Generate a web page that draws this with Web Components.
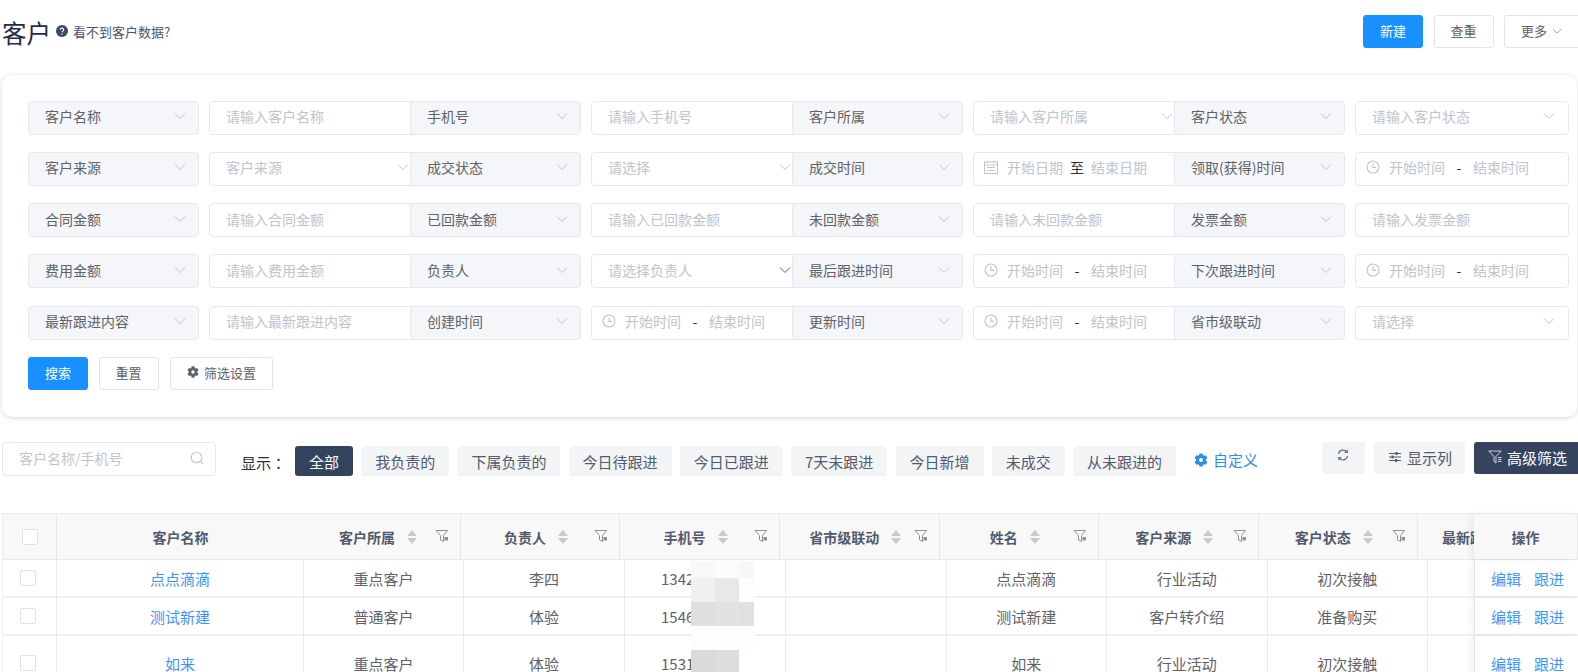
<!DOCTYPE html>
<html lang="zh">
<head>
<meta charset="utf-8">
<title>客户</title>
<style>
  html, body { margin: 0; padding: 0; background: #fff; overflow: hidden; height: 100%; }
  body { font-family: "Noto Sans CJK SC", "Noto Sans", sans-serif; color: #606266; }
</style>
</head>
<body>
<crm-page></crm-page>
<script>
/* ICONS */
const ICONS = {
  chevron: '<svg viewBox="0 0 12 12" width="12" height="12" fill="none" stroke="currentColor" stroke-width="1"><path d="M1 3.5l5 5 5-5"/></svg>',
  clock: '<svg viewBox="0 0 14 14" width="14" height="14" fill="none" stroke="currentColor" stroke-width="1.1"><circle cx="7" cy="7" r="6"/><path d="M7 3.2V7.4h3"/></svg>',
  date: '<svg viewBox="0 0 14 14" width="14" height="14" fill="none" stroke="currentColor" stroke-width="1"><rect x=".5" y="2" width="13" height="11.500"/><path d="M.5 5h13M4 .5V3M10 .5V3M3 7.500h8M3 10.500h8"/></svg>',
  gear: '<svg viewBox="0 0 14 14" width="100%" height="100%"><path fill="currentColor" fill-rule="evenodd" d="M5.400.4h3.200l.4 1.800 1 .6 1.800-.6 1.600 2.800-1.400 1.300v1.400l1.400 1.300-1.600 2.800-1.800-.6-1 .6-.4 1.800H5.400L5 11.800l-1-.6-1.800.6L.6 9l1.400-1.300V6.300L.6 5l1.600-2.800 1.800.6 1-.6zM7 5a2 2 0 1 0 0 4 2 2 0 0 0 0-4z"/></svg>',
  search: '<svg viewBox="0 0 14 14" width="14" height="14" fill="none" stroke="currentColor" stroke-width="1.1"><circle cx="6.500" cy="6.500" r="5.300"/><path d="M10.400 10.400l2.800 2.800"/></svg>',
  refresh: '<svg viewBox="0 0 12 12" width="12" height="12" fill="none" stroke="currentColor" stroke-width="1.200"><path d="M1.500 5A4.600 4.600 0 0 1 9.800 3"/><path d="M10.500 7A4.600 4.600 0 0 1 2.200 9"/><path d="M10.200 .8V3.400H7.700M1.800 11.200V8.600h2.500"/></svg>',
  sliders: '<svg viewBox="0 0 12 12" width="12" height="12" fill="none" stroke="currentColor" stroke-width="1.100"><path d="M0 2.500h12M0 6h12M0 9.500h12"/><path stroke-width="2" d="M7.500 1v3M3.500 4.500v3M7 8v3"/></svg>',
  funnel: '<svg viewBox="0 0 14 14" width="14" height="14" fill="none" stroke="currentColor" stroke-width="1"><path d="M.8 1h12.400L8 6.500V13L6 11.500V6.500z"/><path d="M10 7.500h3.500M10 9.500h3.500M10 11.500h3.500"/></svg>',
  help: '<svg viewBox="0 0 12 12" width="12" height="12"><circle cx="6" cy="6" r="6" fill="#3a4a63"/><path d="M4.300 4.700a1.700 1.700 0 1 1 2.600 1.400c-.6.400-.9.600-.9 1.200" fill="none" stroke="#fff" stroke-width="1.100"/><circle cx="6" cy="9" r=".7" fill="#fff"/></svg>'
};

/* BUTTON */
class UiButton extends HTMLElement {
  constructor() {
    super();
    this.attachShadow({ mode: 'open' });
    this.shadowRoot.innerHTML = `<style>
      :host { display: inline-flex; align-items: center; justify-content: center; box-sizing: border-box;
        height: 33px; width: 60px; padding-bottom: 2px; border: 1px solid #e1e4ec; border-radius: 3px; background: #fff;
        color: #606266; font-size: 13px; gap: 5px; white-space: nowrap; }
      :host([primary]) { background: #1890ff; border-color: #1890ff; color: #fff; }
    </style><slot></slot>`;
  }
}
customElements.define('ui-button', UiButton);

/* FILTER FIELDS */
class FieldLabel extends HTMLElement {
  constructor() {
    super();
    this.attachShadow({ mode: 'open' });
    this.shadowRoot.innerHTML = `<style>
      :host { display: flex; align-items: center; justify-content: space-between; box-sizing: border-box;
        position: relative; z-index: 1; flex: none; width: 171px; height: 34px; padding: 0 12px 3px 16px;
        background: #f4f6fa; border: 1px solid #e6e8f0; border-radius: 4px; color: #606266; font-size: 14px; white-space: nowrap; }
      i { display: flex; color: #c0c4cc; }
    </style><slot></slot><i>${ICONS.chevron}</i>`;
  }
}
customElements.define('field-label', FieldLabel);

class FieldInput extends HTMLElement {
  constructor() {
    super();
    this.attachShadow({ mode: 'open' });
    this.shadowRoot.innerHTML = `<style>
      :host { display: flex; align-items: center; justify-content: space-between; box-sizing: border-box;
        flex: none; width: 214px; height: 34px; padding: 0 13px 3px 16px; margin: 0 -14px 0 10px;
        background: #fff; border: 1px solid #e6e8f0; border-radius: 4px; color: #c0c4cc; font-size: 14px; white-space: nowrap; }
      i { display: flex; color: #c0c4cc; }
      :host([dark]) i { color: #606266; }
    </style><slot></slot>`;
    if (this.hasAttribute('arrow')) {
      this.shadowRoot.innerHTML += `<i>${ICONS.chevron}</i>`;
    }
  }
}
customElements.define('field-input', FieldInput);

class FieldRange extends HTMLElement {
  constructor() {
    super();
    this.attachShadow({ mode: 'open' });
    const isDate = this.getAttribute('kind') === 'date';
    const start = isDate ? '开始日期' : '开始时间';
    const end = isDate ? '结束日期' : '结束时间';
    const sep = isDate ? '至' : '-';
    this.shadowRoot.innerHTML = `<style>
      :host { display: flex; align-items: center; box-sizing: border-box; flex: none; width: 214px; height: 34px;
        padding: 0 0 3px 10px; margin: 0 -14px 0 10px; background: #fff; border: 1px solid #e6e8f0; border-radius: 4px;
        color: #c0c4cc; font-size: 14px; white-space: nowrap; }
      i { display: flex; margin-right: 9px; }
      b { font-weight: 400; width: 28px; text-align: center; color: #303133; }
    </style><i>${isDate ? ICONS.date : ICONS.clock}</i><span>${start}</span><b>${sep}</b><span>${end}</span>`;
  }
}
customElements.define('field-range', FieldRange);

/* PAGE HEADER */
class CrmHeader extends HTMLElement {
  constructor() {
    super();
    this.attachShadow({ mode: 'open' });
    this.shadowRoot.innerHTML = `<style>
      :host { display: flex; justify-content: space-between; box-sizing: border-box; height: 48px; padding: 15px 0 0; }
      .title { display: flex; align-items: center; height: 36px; }
      h1 { margin: 0 5px 0 0; font-size: 24.500px; font-weight: 400; color: #1f2d45; line-height: 36px; }
      .tip { display: flex; align-items: center; gap: 5px; font-size: 13px; color: #4a5468; margin-top: -4px; }
      .btns { display: flex; gap: 10.500px; margin-right: -8px; }
      .more { width: 82px; justify-content: flex-start; padding-left: 16px; }
      .more i { display: flex; color: #909399; }
    </style>
    <div class="title"><h1>客户</h1><div class="tip">${ICONS.help}<span>看不到客户数据?</span></div></div>
    <div class="btns">
      <ui-button primary>新建</ui-button>
      <ui-button>查重</ui-button>
      <ui-button class="more">更多<i>${ICONS.chevron.replace(/"12"/g, '"10"')}</i></ui-button>
    </div>`;
  }
}
customElements.define('crm-header', CrmHeader);

/* FILTER PANEL */
const FILTERS = [
  ['客户名称', 'i:请输入客户名称'], ['手机号', 'i:请输入手机号'], ['客户所属', 'a:请输入客户所属'], ['客户状态', 'a:请输入客户状态'],
  ['客户来源', 'a:客户来源'], ['成交状态', 'a:请选择'], ['成交时间', 'd'], ['领取(获得)时间', 't'],
  ['合同金额', 'i:请输入合同金额'], ['已回款金额', 'i:请输入已回款金额'], ['未回款金额', 'i:请输入未回款金额'], ['发票金额', 'i:请输入发票金额'],
  ['费用金额', 'i:请输入费用金额'], ['负责人', 'k:请选择负责人'], ['最后跟进时间', 't'], ['下次跟进时间', 't'],
  ['最新跟进内容', 'i:请输入最新跟进内容'], ['创建时间', 't'], ['更新时间', 't'], ['省市级联动', 'a:请选择']
];

class CrmFilter extends HTMLElement {
  constructor() {
    super();
    this.attachShadow({ mode: 'open' });
    const items = FILTERS.map(([label, field]) => {
      let right = '';
      if (field === 't') right = '<field-range></field-range>';
      else if (field === 'd') right = '<field-range kind="date"></field-range>';
      else if (field[0] === 'a') right = `<field-input arrow>${field.slice(2)}</field-input>`;
      else if (field[0] === 'k') right = `<field-input arrow dark>${field.slice(2)}</field-input>`;
      else right = `<field-input>${field.slice(2)}</field-input>`;
      return `<div class="item"><field-label>${label}</field-label>${right}</div>`;
    }).join('');
    this.shadowRoot.innerHTML = `<style>
      :host { display: block; box-sizing: border-box; width: 1575px; height: 342px; margin-top: 26.500px;
        padding: 26px 0 0 26px; background: #fff; border-radius: 10px;
        box-shadow: 0 1px 5px rgba(0, 0, 0, .16); }
      .grid { display: grid; grid-template-columns: repeat(4, 382px); row-gap: 17.250px; }
      .item { display: flex; }
      .btns { display: flex; gap: 10.500px; margin-top: 17px; }
      .set { width: 103px; margin-left: 1px; }
      .set i { display: flex; width: 12px; height: 12px; color: #5a6270; }
    </style>
    <div class="grid">${items}</div>
    <div class="btns">
      <ui-button primary>搜索</ui-button>
      <ui-button>重置</ui-button>
      <ui-button class="set"><i>${ICONS.gear}</i>筛选设置</ui-button>
    </div>`;
  }
}
customElements.define('crm-filter', CrmFilter);

/* TOOLBAR */
class ScopeTab extends HTMLElement {
  constructor() {
    super();
    this.attachShadow({ mode: 'open' });
    this.shadowRoot.innerHTML = `<style>
      :host { display: flex; align-items: center; box-sizing: border-box; height: 30px; padding: 0 14px;
        background: #f3f4f6; border-radius: 3px; color: #515a6e; font-size: 15px; white-space: nowrap; }
      :host([active]) { background: #34435e; color: #fff; }
    </style><slot></slot>`;
  }
}
customElements.define('scope-tab', ScopeTab);

class CrmToolbar extends HTMLElement {
  constructor() {
    super();
    this.attachShadow({ mode: 'open' });
    const tabs = ['我负责的', '下属负责的', '今日待跟进', '今日已跟进', '7天未跟进', '今日新增', '未成交', '从未跟进的']
      .map(t => `<scope-tab>${t}</scope-tab>`).join('');
    this.shadowRoot.innerHTML = `<style>
      :host { display: flex; align-items: flex-start; height: 34px; margin-top: 25.500px; }
      .search { display: flex; align-items: center; justify-content: space-between; box-sizing: border-box;
        width: 214px; height: 34px; padding: 0 11px 3px 16px; border: 1px solid #e6e8f0; border-radius: 4px;
        color: #c0c4cc; font-size: 14px; }
      .search i { display: flex; }
      .show { margin: 10px 0 0 25px; width: 54px; font-size: 15px; line-height: 22px; color: #303133; white-space: nowrap; font-family: "Noto Sans CJK TC", sans-serif; }
      .tabs { display: flex; gap: 8.200px; margin-top: 4px; }
      .custom { display: flex; align-items: center; gap: 5px; height: 30px; padding-bottom: 3px; box-sizing: border-box; margin: 4px 0 0 18px; color: #2d8cf0; font-size: 15px; white-space: nowrap; }
      .custom i { display: flex; width: 14px; height: 14px; }
      .right { display: flex; gap: 9px; margin-left: auto; margin-right: -8px; }
      .tool { display: flex; align-items: center; box-sizing: border-box; height: 32px; padding-bottom: 2px; border-radius: 3px;
        background: #f3f4f6; color: #515a6e; font-size: 15px; white-space: nowrap; }
      .tool i { display: flex; }
      .tool.re { width: 43px; padding: 0 0 6px 15px; color: #666e7c; }
      .tool.col { width: 91px; padding-left: 15px; gap: 6px; }
      .tool.adv { width: 112px; padding-left: 14px; gap: 5px; background: #34435e; color: #fff; }
      .tool.adv i { color: #cfd4dd; }
    </style>
    <div class="search"><span>客户名称/手机号</span><i>${ICONS.search}</i></div>
    <div class="show" lang="zh-TW">显示：</div>
    <div class="tabs"><scope-tab active>全部</scope-tab>${tabs}</div>
    <div class="custom"><i>${ICONS.gear}</i>自定义</div>
    <div class="right">
      <div class="tool re"><i>${ICONS.refresh}</i></div>
      <div class="tool col"><i>${ICONS.sliders}</i>显示列</div>
      <div class="tool adv"><i>${ICONS.funnel}</i>高级筛选</div>
    </div>`;
  }
}
customElements.define('crm-toolbar', CrmToolbar);

/* TABLE */
const HEAD_COLS = '54px 247px 157px 159px 160px 159.500px 159.500px 159.500px 159.500px 56px 104px';
const BODY_COLS = '54px 247px 160px 161px 161px 160.500px 160.500px 160.500px 160.500px 47px 104px';

const ROWS = [
  { h: 38, name: '点点滴滴', owner: '重点客户', lead: '李四', phone: '1342', who: '点点滴滴', src: '行业活动', state: '初次接触' },
  { h: 38, name: '测试新建', owner: '普通客户', lead: '体验', phone: '1546', who: '测试新建', src: '客户转介绍', state: '准备购买' },
  { h: 56, name: '如来', owner: '重点客户', lead: '体验', phone: '1531', who: '如来', src: '行业活动', state: '初次接触' }
];

// 手机号 columns are pixelated in the source, colours read off the reference
const MOSAIC = [
  '#f8f8f8', '#fbfbfb', '#f6f7f9',
  '#f0f0f0', '#e8e8e8', '#fdfdfd',
  '#dfdfdf', '#e2e2e2', '#e0e0e2',
  '#fdfdfd', '#fefefe', '#fefefe',
  '#dadada', '#dddddd', '#ffffff'
];

class CrmTable extends HTMLElement {
  constructor() {
    super();
    this.attachShadow({ mode: 'open' });
    const funnel = '<svg class="fl" viewBox="0 0 14 14" width="14" height="14" fill="none" stroke="#8c929c" stroke-width="1"><path d="M1 1.500h11.500L8.500 6.500v6l-3-1.500V6.500z"/><rect x="9.500" y="8" width="3.500" height="3.500" fill="#8c929c" stroke="none"/></svg>';
    const caret = '<svg class="cr" viewBox="0 0 10 16" width="10" height="16" fill="#c6cad2"><path d="M5 1l5 6H0zM5 15L0 9h10z"/></svg>';
    const th = t => `<div class="th"><span>${t}</span>${caret}${funnel}</div>`;
    const heads = ['客户所属', '负责人', '手机号', '省市级联动', '姓名', '客户来源', '客户状态'].map(th).join('');
    const rows = ROWS.map(r => `<div class="row" style="height:${r.h}px">
      <div class="td chk"><span class="box"></span></div>
      <div class="td link">${r.name}</div>
      <div class="td">${r.owner}</div>
      <div class="td">${r.lead}</div>
      <div class="td phone">${r.phone}</div>
      <div class="td"></div>
      <div class="td">${r.who}</div>
      <div class="td">${r.src}</div>
      <div class="td">${r.state}</div>
      <div class="td"></div>
      <div class="td ops"><span>编辑</span><span>跟进</span></div>
    </div>`).join('');
    const mosaic = MOSAIC.map(c => `<b style="background:${c}"></b>`).join('');
    this.shadowRoot.innerHTML = `<style>
      :host { display: block; position: relative; margin: 37px 0 0 0; width: 1576px; font-size: 15px; color: #606266; }
      .head { display: grid; grid-template-columns: ${HEAD_COLS}; height: 47px; box-sizing: border-box;
        background: #f8f8f9; border-top: 1px solid #e8eaf0; border-bottom: 1px solid #e8eaf0; border-left: 1px solid #e8eaf0; }
      .th { position: relative; display: flex; align-items: center; justify-content: center; box-sizing: border-box;
        padding-right: 8px; gap: 12px; border-right: 1px solid #e4e7ed; font-size: 14px; font-weight: 700; color: #515a6e; white-space: nowrap; overflow: hidden; }
      .th.plain { padding-right: 0; }
      .th.open { border-right: 0; }
      .th.clip { justify-content: flex-start; padding-left: 24px; border-right: 0; }
      .fl { position: absolute; right: 11px; top: 15px; }
      .row { display: grid; grid-template-columns: ${BODY_COLS}; box-sizing: border-box; border-bottom: 2px solid #eef0f5; border-left: 1px solid #eef0f5; }
      .td { display: flex; align-items: center; justify-content: center; border-right: 1px solid #e8eaf0; white-space: nowrap; }
      .td.chk { padding-right: 4px; }
      .td.link { color: #3d95fb; }
      .td.phone { justify-content: flex-start; padding-left: 36px; }
      .td.ops { gap: 13px; justify-content: flex-start; padding-left: 16px; color: #3d95fb; border-right: 0; }
      .box { display: block; box-sizing: border-box; width: 16px; height: 16px; border: 1px solid #dfe2e8; border-radius: 2px; background: #fff; }
      .fixed { background: #fff; box-shadow: -4px 0 6px rgba(0, 0, 0, .05); }
      .head .fixed { background: #f8f8f9; }
      .mosaic { position: absolute; left: 689px; top: 48px; display: grid;
        grid-template-columns: 24px 24px 15px; grid-template-rows: 17px 24px 24px 24px 24px; }
    </style>
    <div class="head">
      <div class="th plain"><span class="box"></span></div>
      <div class="th plain open">客户名称</div>
      ${heads}
      <div class="th clip">最新跟进内容</div>
      <div class="th plain fixed">操作</div>
    </div>
    ${rows}
    <div class="mosaic">${mosaic}</div>`;
    this.shadowRoot.querySelectorAll('.row').forEach(row => row.lastElementChild.classList.add('fixed'));
  }
}
customElements.define('crm-table', CrmTable);

/* PAGE */
class CrmPage extends HTMLElement {
  constructor() {
    super();
    this.attachShadow({ mode: 'open' });
    this.shadowRoot.innerHTML = `<style>
      :host { display: block; box-sizing: border-box; width: 1578px; padding-left: 2px; }
    </style>
    <crm-header></crm-header>
    <crm-filter></crm-filter>
    <crm-toolbar></crm-toolbar>
    <crm-table></crm-table>`;
  }
}
customElements.define('crm-page', CrmPage);
</script>
</body>
</html>
